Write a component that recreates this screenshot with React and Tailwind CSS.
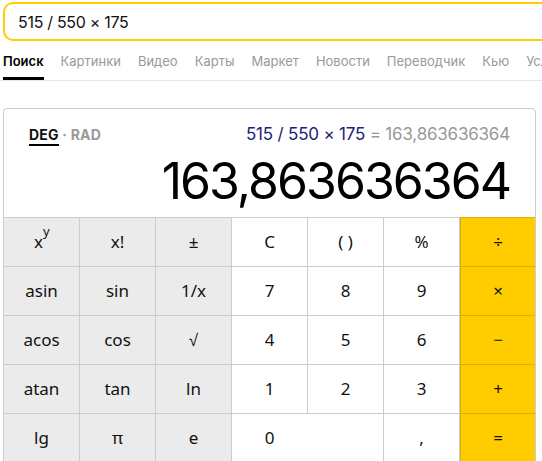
import React from "react";

const tabs = ["Поиск", "Картинки", "Видео", "Карты", "Маркет", "Новости", "Переводчик", "Кью", "Услуги"];

const rows = [
  [
    {
      t: (
        <span className="relative -ml-[6px]">
          x<span className="absolute left-full -top-[7px] text-[13px]">y</span>
        </span>
      ),
      k: "fn",
    },
    { t: "x!", k: "fn" },
    { t: "±", k: "fn" },
    { t: "C" },
    { t: "( )" },
    { t: "%" },
    { t: "÷", k: "op" },
  ],
  [
    { t: "asin", k: "fn" },
    { t: "sin", k: "fn" },
    { t: "1/x", k: "fn" },
    { t: "7" },
    { t: "8" },
    { t: "9" },
    { t: "×", k: "op" },
  ],
  [
    { t: "acos", k: "fn" },
    { t: "cos", k: "fn" },
    { t: "√", k: "fn" },
    { t: "4" },
    { t: "5" },
    { t: "6" },
    { t: "−", k: "op" },
  ],
  [
    { t: "atan", k: "fn" },
    { t: "tan", k: "fn" },
    { t: "ln", k: "fn" },
    { t: "1" },
    { t: "2" },
    { t: "3" },
    { t: "+", k: "op" },
  ],
];

const Key = ({ t, k }) => {
  const base = "h-[49px] flex items-center justify-center border-t text-[17px] text-[#111]";
  if (k === "op")
    return <div className={`${base} bg-[#ffcc00] border-[#dcb000] border-l`}>{t}</div>;
  if (k === "fn")
    return <div className={`${base} bg-[#ebebeb] border-[#cccccc] border-r`}>{t}</div>;
  return <div className={`${base} bg-white border-[#cccccc] border-r`}>{t}</div>;
};

export default function App() {
  return (
    <div className="w-[542px] h-[461px] overflow-hidden bg-white font-['Inter',sans-serif]">
      {/* search box */}
      <div className="pt-[2px] pl-[3px]">
        <div className="w-[620px] h-[39px] border-2 border-[#ffcc00] rounded-[10px] flex items-center pl-[13px] text-[16px] tracking-[-0.3px] text-[#111]">
          515 / 550 × 175
        </div>
      </div>

      {/* tabs */}
      <div className="h-[40px] border-b border-[#e6e6e6] flex gap-[17px] pl-[3px] whitespace-nowrap">
        {tabs.map((tab, i) => (
          <div
            key={tab}
            className={`h-full flex items-center text-[13px] ${
              i === 0 ? "font-semibold text-black border-b-[3px] border-black pt-[6px]" : "text-[#999] pt-[3px]"
            }`}
          >
            {tab}
          </div>
        ))}
      </div>

      {/* calculator */}
      <div className="mt-[27px] ml-[3px] w-[533px] border border-[#cccccc] rounded-t-[4px] bg-white">
        <div className="h-[108px] px-[25px] pt-[15px] flex flex-col">
          <div className="flex justify-between items-baseline leading-5">
            <div className="text-[14px] font-bold tracking-[0.2px]">
              <span className="text-[#111] border-b-2 border-black pb-[1px]">DEG</span>
              <span className="text-[#999]"> · RAD</span>
            </div>
            <div className="text-[17px] tracking-[-0.2px]">
              <span className="text-[#21217a]">515 / 550 × 175</span>
              <span className="text-[#999]"> = 163,863636364</span>
            </div>
          </div>
          <div className="mt-[11px] text-right text-[50px] leading-none tracking-[-2px] text-black">163,863636364</div>
        </div>

        <div className="grid grid-cols-[repeat(6,76px)_75px] font-['Noto_Sans',sans-serif]">
          {rows.map((row, ri) =>
            row.map((c, ci) => <Key key={`${ri}-${ci}`} t={c.t} k={c.k} />)
          )}
          <Key t="lg" k="fn" />
          <Key t="π" k="fn" />
          <Key t="e" k="fn" />
          <div className="col-span-2 h-[49px] flex items-center border-t border-r border-[#cccccc] text-[17px] text-[#111]">
            <span className="w-[75px] text-center">0</span>
          </div>
          <Key t="," />
          <Key t="=" k="op" />
        </div>
      </div>
    </div>
  );
}
